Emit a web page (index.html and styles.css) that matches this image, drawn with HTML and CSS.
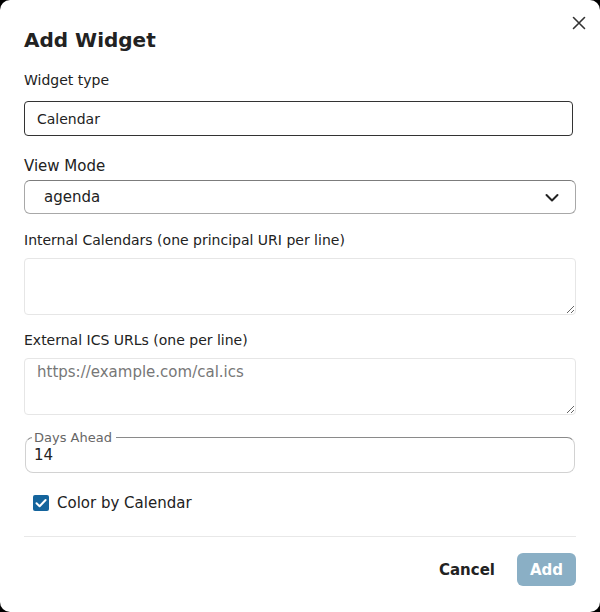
FILE: index.html
```html
<!DOCTYPE html>
<html lang="en">
<head>
<meta charset="utf-8">
<title>Add Widget</title>
<link rel="stylesheet" href="styles.css">
</head>
<body>
<div class="dialog">
  <button class="close" aria-label="Close">
    <svg width="14" height="14" viewBox="0 0 14 14"><path d="M1.5 1.5 L12.5 12.5 M12.5 1.5 L1.5 12.5" stroke="#333" stroke-width="1.6" stroke-linecap="round" fill="none"/></svg>
  </button>
  <h2 class="title">Add Widget</h2>

  <label class="label l-type">Widget type</label>
  <input class="text-input" type="text" value="Calendar" readonly>

  <label class="label l-view">View Mode</label>
  <div class="select">
    <span>agenda</span>
    <svg width="14" height="10" viewBox="0 0 14 10"><path d="M1.5 2 L7 7.5 L12.5 2" stroke="#222" stroke-width="2" fill="none" stroke-linecap="round" stroke-linejoin="round"/></svg>
  </div>

  <label class="label l-small l-int">Internal Calendars (one principal URI per line)</label>
  <textarea class="area"></textarea>

  <label class="label l-small l-ext">External ICS URLs (one per line)</label>
  <textarea class="area" placeholder="https://example.com/cal.ics"></textarea>

  <fieldset class="outlined">
    <legend>Days Ahead</legend>
    <input class="days" type="text" value="14" readonly>
  </fieldset>

  <div class="check-row">
    <span class="checkbox">
      <svg width="16" height="16" viewBox="0 0 16 16"><path d="M3.5 8.2 L6.6 11.2 L12.6 5" stroke="#fff" stroke-width="2" fill="none" stroke-linecap="round" stroke-linejoin="round"/></svg>
    </span>
    <span class="check-label">Color by Calendar</span>
  </div>

  <div class="divider"></div>

  <div class="footer">
    <button class="btn-cancel">Cancel</button>
    <button class="btn-add">Add</button>
  </div>
</div>
</body>
</html>
```
FILE: styles.css
```css
* { box-sizing: border-box; }
html, body {
  margin: 0;
  padding: 0;
  background: #000;
}
body {
  font-family: "DejaVu Sans", "Noto Sans", sans-serif;
  color: #222;
}
.dialog {
  position: relative;
  width: 600px;
  height: 612px;
  background: #fff;
  border-radius: 10px;
  padding: 28px 24px 0 24px;
  display: flex;
  flex-direction: column;
}
.close {
  position: absolute;
  top: 15px;
  right: 13px;
  width: 16px;
  height: 16px;
  padding: 0;
  border: none;
  background: none;
  display: flex;
  align-items: center;
  justify-content: center;
}
.title {
  margin: 0;
  font-size: 20px;
  font-weight: bold;
  line-height: 24px;
  color: #222;
}
.label {
  display: block;
  font-size: 14px;
  line-height: 20px;
  color: #222;
}
.l-type { margin-top: 18px; }
.l-view { margin-top: 20px; font-size: 15px; }
.l-small { font-size: 14px; line-height: 18px; }
.l-int { margin-top: 17px; }
.l-ext { margin-top: 16px; }
.text-input {
  margin-top: 11px;
  width: 549px;
  height: 35px;
  border: 1px solid #333;
  border-radius: 4px;
  padding: 0 12px;
  font-family: inherit;
  font-size: 14px;
  color: #222;
  outline: none;
}
.select {
  margin-top: 4px;
  width: 552px;
  height: 34px;
  border: 1px solid #a8a8a8;
  border-top-color: #7c7c7c;
  border-radius: 6px;
  padding: 0 16px 0 19px;
  display: flex;
  align-items: center;
  justify-content: space-between;
  font-size: 15px;
  color: #222;
}
.select svg { margin-top: 1px; }
.area {
  display: block;
  margin-top: 9px;
  width: 552px;
  height: 57px;
  border: 1px solid #e6e6e6;
  border-radius: 4px;
  padding: 4px 12px;
  font-family: inherit;
  font-size: 15px;
  line-height: 18px;
  color: #222;
  resize: vertical;
  outline: none;
}
.area::placeholder { color: #777; }
.outlined {
  margin: 15px 0 0 1px;
  width: 550px;
  border: 1px solid #d2d2d2;
  border-top-color: #8a8a8a;
  border-radius: 8px;
  padding: 0 8px 6px 6px;
  min-inline-size: 0;
}
.outlined legend {
  padding: 0 4px 0 2px;
  font-size: 13px;
  line-height: 15px;
  color: #666;
}
.days {
  display: block;
  width: 100%;
  border: none;
  padding: 0 0 0 2px;
  margin: 0;
  height: 21px;
  line-height: 21px;
  font-family: inherit;
  font-size: 15px;
  color: #222;
  outline: none;
  background: transparent;
}
.check-row {
  margin-top: 20px;
  padding-left: 9px;
  display: flex;
  align-items: center;
  gap: 8px;
  height: 20px;
}
.checkbox {
  width: 16px;
  height: 16px;
  border-radius: 2px;
  background: #14649c;
  display: flex;
}
.check-label {
  font-size: 15px;
  color: #222;
}
.divider {
  margin-top: 23px;
  height: 1px;
  background: #e8e8e8;
}
.footer {
  margin-top: 16px;
  display: flex;
  justify-content: flex-end;
  align-items: center;
  gap: 22px;
}
.btn-cancel {
  border: none;
  background: none;
  padding: 0;
  font-family: inherit;
  font-size: 15px;
  font-weight: bold;
  color: #222;
}
.btn-add {
  height: 33px;
  width: 59px;
  border: none;
  border-radius: 6px;
  background: #8aafc5;
  color: #fff;
  font-family: inherit;
  font-size: 15px;
  font-weight: bold;
  padding: 0;
}
```
